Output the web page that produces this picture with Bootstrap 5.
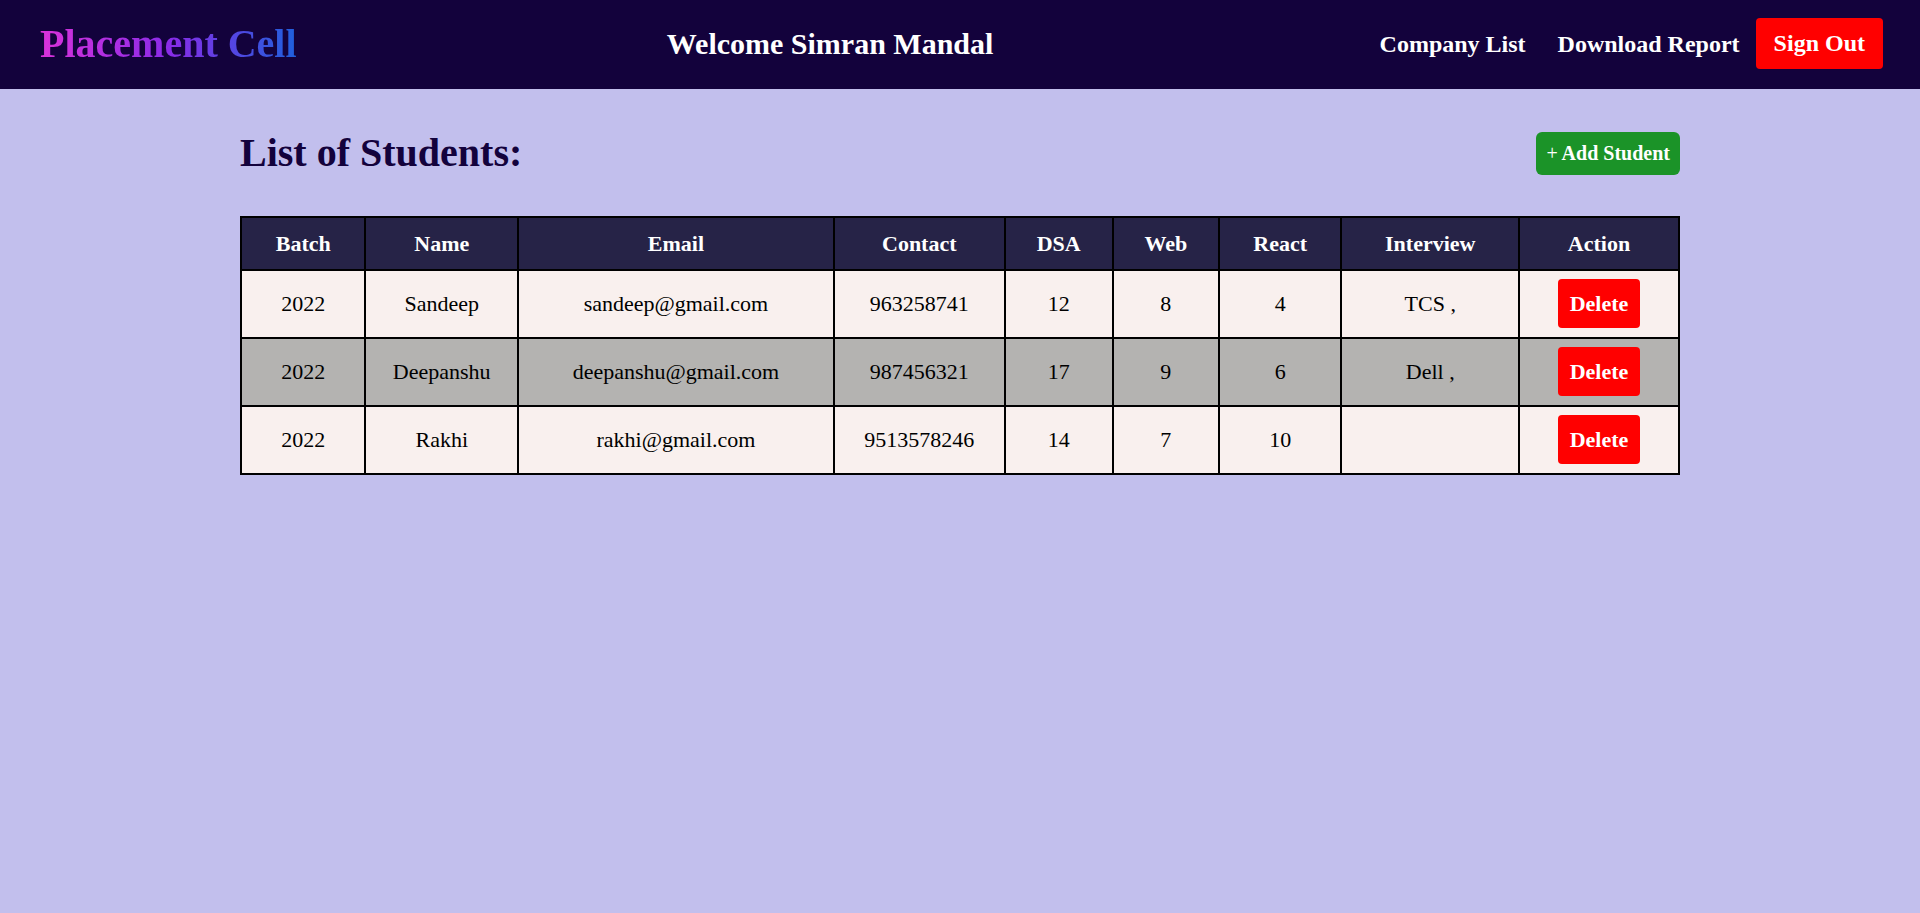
<!DOCTYPE html>
<html lang="en">
<head>
<meta charset="utf-8">
<meta name="viewport" content="width=device-width, initial-scale=1">
<title>Placement Cell</title>
<link href="https://cdn.jsdelivr.net/npm/bootstrap@5.3.0/dist/css/bootstrap.min.css" rel="stylesheet">
<style>
  body { font-family: "Liberation Serif", "Times New Roman", serif; background: #c2bfed; color: #000; }
  .topbar { background: #13023c; padding: 18px 37px 20px 40px; }
  .brand-title { font-size: 40px; line-height: 51px; background: linear-gradient(to right, #d932da, #8a2be8 50%, #1f60dc); -webkit-background-clip: text; background-clip: text; color: transparent; }
  .welcome { font-size: 30px; line-height: 51px; }
  .top-link { font-size: 24px; padding: 0 16px; line-height: 50px; }
  .btn-red, .btn-red:hover { background: #f00; color: #fff; border: 0; border-radius: 4px; font-size: 22px; font-weight: bold; line-height: 25px; }
  .btn-signout, .btn-signout:hover { font-size: 24px; line-height: 27px; padding: 12px 18px; }
  .btn-delete { padding: 12px; margin: 8px 10px 7px; }
  .btn-add, .btn-add:hover { background: #1b9328; color: #fff; border: 0; border-radius: 6px; font-size: 20px; font-weight: bold; line-height: 23px; padding: 10px; }
  .students { width: 75%; }
  .heading-row { padding: 41px 0 40px; }
  .page-title { font-size: 40px; line-height: 46px; color: #13023c; }
  .student-table { width: 100%; border-collapse: collapse; text-align: center; font-size: 22px; line-height: 25px; }
  .student-table th, .student-table td { border: 2px solid #000; padding: 0 1px 2px; }
  .student-table th { background: #262347; color: #fff; padding: 13px; }
  .student-table td { background: #f9f0ee; }
  .student-table tbody tr:nth-child(even) td { background: #b4b3b1; }
</style>
</head>
<body>
<header class="topbar d-flex flex-wrap justify-content-between align-items-center">
  <h1 class="brand-title fw-bold m-0">Placement Cell</h1>
  <h2 class="welcome fw-bold text-white m-0">Welcome Simran Mandal</h2>
  <nav class="d-flex align-items-center">
    <a class="top-link fw-bold text-white text-decoration-none" href="#">Company List</a>
    <a class="top-link fw-bold text-white text-decoration-none" href="#">Download Report</a>
    <button type="button" class="btn btn-red btn-signout">Sign Out</button>
  </nav>
</header>
<main class="students mx-auto">
  <div class="heading-row d-flex justify-content-between align-items-center">
    <h2 class="page-title fw-bold m-0">List of Students:</h2>
    <button type="button" class="btn btn-add"><span class="fw-normal">+</span> Add Student</button>
  </div>
  <table class="student-table">
    <thead>
      <tr><th>Batch</th><th>Name</th><th>Email</th><th>Contact</th><th>DSA</th><th>Web</th><th>React</th><th>Interview</th><th>Action</th></tr>
    </thead>
    <tbody>
      <tr><td>2022</td><td>Sandeep</td><td>sandeep@gmail.com</td><td>963258741</td><td>12</td><td>8</td><td>4</td><td>TCS ,</td><td><button type="button" class="btn btn-red btn-delete">Delete</button></td></tr>
      <tr><td>2022</td><td>Deepanshu</td><td>deepanshu@gmail.com</td><td>987456321</td><td>17</td><td>9</td><td>6</td><td>Dell ,</td><td><button type="button" class="btn btn-red btn-delete">Delete</button></td></tr>
      <tr><td>2022</td><td>Rakhi</td><td>rakhi@gmail.com</td><td>9513578246</td><td>14</td><td>7</td><td>10</td><td></td><td><button type="button" class="btn btn-red btn-delete">Delete</button></td></tr>
    </tbody>
  </table>
</main>
<script src="https://cdn.jsdelivr.net/npm/bootstrap@5.3.0/dist/js/bootstrap.bundle.min.js"></script>
</body>
</html>
